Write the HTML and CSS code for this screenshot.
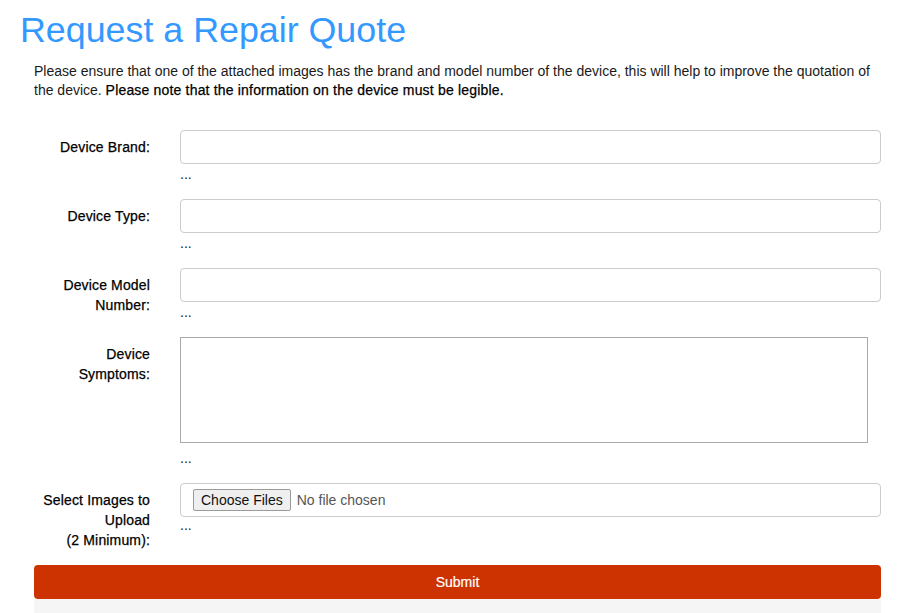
FILE: index.html
```html
<!DOCTYPE html>
<html lang="en">
<head>
<meta charset="utf-8">
<title>Request a Repair Quote</title>
<link rel="stylesheet" href="styles.css">
</head>
<body>
<h1 class="title">Request a Repair Quote</h1>
<div class="container">
  <p class="intro">Please ensure that one of the attached images has the brand and model number of the device, this will help to improve the quotation of the device. <span class="note">Please note that the information on the device must be legible.</span></p>
  <form class="form">
    <div class="row">
      <label class="label" for="brand">Device Brand:</label>
      <div class="field">
        <input class="control" id="brand" type="text">
        <div class="help">...</div>
      </div>
    </div>
    <div class="row">
      <label class="label" for="type">Device Type:</label>
      <div class="field">
        <input class="control" id="type" type="text">
        <div class="help">...</div>
      </div>
    </div>
    <div class="row">
      <label class="label" for="model">Device Model Number:</label>
      <div class="field">
        <input class="control" id="model" type="text">
        <div class="help">...</div>
      </div>
    </div>
    <div class="row">
      <label class="label" for="symptoms">Device Symptoms:</label>
      <div class="field">
        <textarea class="area" id="symptoms"></textarea>
        <div class="help">...</div>
      </div>
    </div>
    <div class="row">
      <label class="label" for="images">Select Images to Upload<br>(2 Minimum):</label>
      <div class="field">
        <input class="control file" id="images" type="file" multiple>
        <div class="help help-tight">...</div>
      </div>
    </div>
    <button class="submit" type="button">Submit</button>
    <div class="well"></div>
  </form>
</div>
</body>
</html>
```
FILE: styles.css
```css
* { box-sizing: border-box; }
html, body { margin: 0; padding: 0; background: #fff; }
body {
  font-family: "Liberation Sans", Arial, sans-serif;
  font-size: 14px;
  line-height: 20px;
  color: #222;
  overflow: hidden;
}
.title {
  margin: 0;
  padding: 8px 0 0 20px;
  font-size: 35.8px;
  font-weight: normal;
  line-height: 44px;
  color: #3399ff;
}
.container {
  padding: 0 36px 0 34px;
}
.intro {
  margin: 10px 0 0;
  line-height: 19px;
  color: #1a1a1a;
}
.note {
  color: #000;
  -webkit-text-stroke: 0.25px #000;
  letter-spacing: 0.18px;
}
.form {
  margin-top: 30px;
}
.row {
  display: grid;
  grid-template-columns: 116px 1fr;
  column-gap: 30px;
  margin-bottom: 15px;
}
.label {
  text-align: right;
  padding-top: 7px;
  color: #000;
  -webkit-text-stroke: 0.25px #000;
  letter-spacing: 0.15px;
}
.field { display: flex; flex-direction: column; align-items: flex-start; }
.control {
  display: block;
  width: 100%;
  height: 34px;
  border: 1px solid #ccc;
  border-radius: 4px;
  background: #fff;
  padding: 6px 12px;
  font: inherit;
}
.file {
  padding: 5px 12px;
  color: #555;
}
.file::file-selector-button {
  font-family: "Liberation Sans", Arial, sans-serif;
  font-size: 14px;
  color: #111;
  background: #efefef;
  border: 1px solid #9a9a9a;
  border-radius: 2px;
  padding: 2px 7px 2px;
  margin-right: 6px;
}
.area {
  display: block;
  width: 688px;
  height: 106px;
  border: 1px solid #aaa;
  margin-bottom: 5px;
  resize: none;
  font: inherit;
}
.help {
  line-height: 20px;
  color: #222;
}
.help-tight {
  line-height: 16px;
}
.submit {
  display: block;
  width: 100%;
  height: 34px;
  margin: 0;
  border: 0;
  border-radius: 4px;
  background: #cc3300;
  color: #fff;
  font-family: "Liberation Sans", Arial, sans-serif;
  font-size: 14px;
  -webkit-text-stroke: 0.2px #fff;
}
.well {
  height: 40px;
  background: #f5f5f5;
}
```
